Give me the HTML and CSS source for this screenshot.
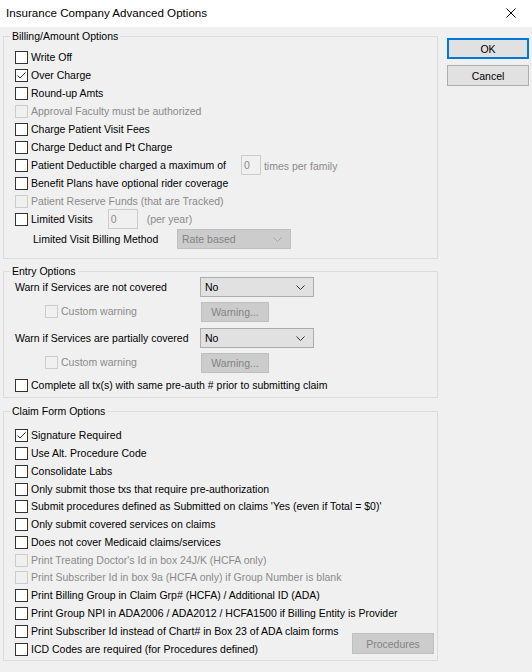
FILE: index.html
```html
<!DOCTYPE html>
<html>
<head>
<meta charset="utf-8">
<link rel="stylesheet" href="styles.css">
</head>
<body>
<div class="titlebar">
  <span class="title">Insurance Company Advanced Options</span>
  <svg class="close" width="10" height="10" viewBox="0 0 10 10"><path d="M0.5 0.5 L9.5 9.5 M9.5 0.5 L0.5 9.5" stroke="#000" stroke-width="1" fill="none"/></svg>
</div>
<div class="main">
  <div class="groups">
    <fieldset class="group g-billing">
      <legend>Billing/Amount Options</legend>
      <div class="content">
        <div class="row"><span class="cb"></span><span class="lbl">Write Off</span></div>
        <div class="row"><span class="cb"><svg width="11" height="11" viewBox="0 0 11 11"><path d="M1.5 5.5 L4 8 L9.5 2.5" stroke="#333" stroke-width="1" fill="none"/></svg></span><span class="lbl">Over Charge</span></div>
        <div class="row"><span class="cb"></span><span class="lbl">Round-up Amts</span></div>
        <div class="row disabled"><span class="cb"></span><span class="lbl">Approval Faculty must be authorized</span></div>
        <div class="row"><span class="cb"></span><span class="lbl">Charge Patient Visit Fees</span></div>
        <div class="row"><span class="cb"></span><span class="lbl">Charge Deduct and Pt Charge</span></div>
        <div class="row"><span class="cb"></span><span class="lbl">Patient Deductible charged a maximum of</span><span class="num num-deduct">0</span><span class="muted muted-times">times per family</span></div>
        <div class="row"><span class="cb"></span><span class="lbl">Benefit Plans have optional rider coverage</span></div>
        <div class="row disabled"><span class="cb"></span><span class="lbl">Patient Reserve Funds (that are Tracked)</span></div>
        <div class="row"><span class="cb"></span><span class="lbl">Limited Visits</span><span class="num num-visits">0</span><span class="muted muted-year">(per year)</span></div>
        <div class="method-row"><span class="method-label">Limited Visit Billing Method</span><div class="select select-disabled select-method"><span>Rate based</span><svg width="9" height="5" viewBox="0 0 9 5"><path d="M0.5 0.5 L4.5 4.5 L8.5 0.5" stroke="#a8a8a8" stroke-width="1" fill="none"/></svg></div></div>
      </div>
    </fieldset>

    <fieldset class="group g-entry">
      <legend>Entry Options</legend>
      <div class="content">
        <div class="erow erow-first"><span class="elabel">Warn if Services are not covered</span><div class="select"><span>No</span><svg width="9" height="5" viewBox="0 0 9 5"><path d="M0.5 0.5 L4.5 4.5 L8.5 0.5" stroke="#333" stroke-width="1" fill="none"/></svg></div></div>
        <div class="erow erow-sub"><span class="custom disabled"><span class="cb"></span><span class="lbl">Custom warning</span></span><span class="btn btn-disabled btn-warn">Warning...</span></div>
        <div class="erow erow-second"><span class="elabel">Warn if Services are partially covered</span><div class="select"><span>No</span><svg width="9" height="5" viewBox="0 0 9 5"><path d="M0.5 0.5 L4.5 4.5 L8.5 0.5" stroke="#333" stroke-width="1" fill="none"/></svg></div></div>
        <div class="erow erow-sub"><span class="custom disabled"><span class="cb"></span><span class="lbl">Custom warning</span></span><span class="btn btn-disabled btn-warn">Warning...</span></div>
        <div class="row row-complete"><span class="cb"></span><span class="lbl">Complete all tx(s) with same pre-auth # prior to submitting claim</span></div>
      </div>
    </fieldset>

    <fieldset class="group g-claim">
      <legend>Claim Form Options</legend>
      <div class="content">
        <div class="row crow"><span class="cb"><svg width="11" height="11" viewBox="0 0 11 11"><path d="M1.5 5.5 L4 8 L9.5 2.5" stroke="#333" stroke-width="1" fill="none"/></svg></span><span class="lbl">Signature Required</span></div>
        <div class="row crow"><span class="cb"></span><span class="lbl">Use Alt. Procedure Code</span></div>
        <div class="row crow"><span class="cb"></span><span class="lbl">Consolidate Labs</span></div>
        <div class="row crow"><span class="cb"></span><span class="lbl">Only submit those txs that require pre-authorization</span></div>
        <div class="row crow"><span class="cb"></span><span class="lbl">Submit procedures defined as Submitted on claims 'Yes (even if Total = $0)'</span></div>
        <div class="row crow"><span class="cb"></span><span class="lbl">Only submit covered services on claims</span></div>
        <div class="row crow"><span class="cb"></span><span class="lbl">Does not cover Medicaid claims/services</span></div>
        <div class="row crow disabled"><span class="cb"></span><span class="lbl">Print Treating Doctor's Id in box 24J/K (HCFA only)</span></div>
        <div class="row crow disabled"><span class="cb"></span><span class="lbl">Print Subscriber Id in box 9a (HCFA only) if Group Number is blank</span></div>
        <div class="row crow"><span class="cb"></span><span class="lbl">Print Billing Group in Claim Grp# (HCFA) / Additional ID (ADA)</span></div>
        <div class="row crow"><span class="cb"></span><span class="lbl">Print Group NPI in ADA2006 / ADA2012 / HCFA1500 if Billing Entity is Provider</span></div>
        <div class="row crow"><span class="cb"></span><span class="lbl">Print Subscriber Id instead of Chart# in Box 23 of ADA claim forms</span></div>
        <div class="row crow row-icd"><span class="cb"></span><span class="lbl">ICD Codes are required (for Procedures defined)</span><span class="btn btn-disabled btn-proc">Procedures</span></div>
      </div>
    </fieldset>
  </div>
  <div class="actions">
    <span class="btn btn-ok">OK</span>
    <span class="btn btn-cancel">Cancel</span>
  </div>
</div>
</body>
</html>
```

FILE: styles.css
```css
html, body {
  margin: 0;
  padding: 0;
}
body {
  width: 532px;
  height: 672px;
  overflow: hidden;
  background: #f0f0f0;
  font-family: "Liberation Sans", Arial, sans-serif;
  font-size: 10.5px;
  color: #000;
}
.titlebar {
  height: 27px;
  background: #fff;
  display: flex;
  align-items: center;
  justify-content: space-between;
  padding: 0 16px 0 6px;
  box-sizing: border-box;
}
.title {
  font-size: 11.6px;
  line-height: 16px;
  margin-top: -1px;
}
.close {
  display: block;
  margin-top: -1px;
}
.main {
  display: flex;
  align-items: flex-start;
  padding: 3px 0 0 3px;
  gap: 9px;
}
.groups {
  width: 435px;
  display: flex;
  flex-direction: column;
}
.group {
  margin: 0;
  padding: 0;
  border: 1px solid #dcdcdc;
  min-width: 0;
}
.group legend {
  margin-left: 6px;
  padding: 0 2px;
  line-height: 13px;
  font-size: 10.5px;
}
.g-entry { margin-top: 6px; }
.g-claim { margin-top: 7px; }
.content {
  padding-left: 11px;
}
.g-billing .content { padding-top: 5px; padding-bottom: 9px; }
.g-entry .content { padding-top: 0; padding-bottom: 3px; }
.g-claim .content { padding-top: 9px; padding-bottom: 2px; }

.row {
  height: 18px;
  display: flex;
  align-items: center;
  white-space: nowrap;
}
.crow { height: 17.75px; }
.cb {
  width: 13px;
  height: 13px;
  box-sizing: border-box;
  border: 1px solid #333;
  background: #fff;
  flex: none;
  display: flex;
  align-items: center;
  justify-content: center;
}
.cb svg { display: block; }
.lbl {
  margin-left: 3px;
  line-height: 13px;
}
.disabled .cb {
  border-color: #cccccc;
  background: #f0f0f0;
}
.disabled .lbl {
  color: #8a8a8a;
}
.num {
  height: 20px;
  box-sizing: border-box;
  border: 1px solid #cccccc;
  background: #f0f0f0;
  color: #8a8a8a;
  line-height: 18px;
  padding-left: 2px;
  flex: none;
}
.num-deduct { width: 20px; margin-left: 15px; }
.num-visits { width: 30px; margin-left: 15px; margin-top: -1px; }
.muted { color: #8a8a8a; }
.muted-times { margin-left: 3px; margin-top: 2px; }
.muted-year { margin-left: 9px; }

.method-row {
  display: flex;
  align-items: center;
  margin-top: 1px;
  height: 20px;
}
.method-label {
  width: 144px;
  padding-left: 18px;
  flex: none;
}
.select {
  width: 114px;
  height: 20px;
  box-sizing: border-box;
  border: 1px solid #adadad;
  background: #e1e1e1;
  display: flex;
  align-items: center;
  justify-content: space-between;
  padding: 0 8px 0 4px;
  flex: none;
}
.select svg { display: block; }
.select-disabled {
  background: #cccccc;
  border-color: #bfbfbf;
  color: #838383;
}

.erow {
  display: flex;
  align-items: center;
  height: 20px;
  white-space: nowrap;
}
.erow-first { margin-top: -1px; }
.erow-sub { margin-top: 5px; }
.erow-second { margin-top: 6px; }
.elabel {
  width: 185px;
  flex: none;
}
.custom {
  display: flex;
  align-items: center;
  width: 186px;
  padding-left: 30px;
  box-sizing: border-box;
  flex: none;
  margin-top: -1px;
}
.row-complete { margin-top: 3px; }

.btn {
  display: flex;
  align-items: center;
  justify-content: center;
  box-sizing: border-box;
  border: 1px solid #adadad;
  background: #e1e1e1;
  font-size: 10.5px;
  flex: none;
}
.btn-disabled {
  background: #cccccc;
  border-color: #bfbfbf;
  color: #838383;
}
.btn-warn {
  width: 68px;
  height: 20px;
}
.row-icd {
  align-items: flex-start;
}
.row-icd .cb { margin-top: 3px; }
.row-icd .lbl { margin-top: 3px; }
.btn-proc {
  width: 82px;
  height: 21px;
  margin-left: auto;
  margin-right: 3px;
  margin-top: -7px;
}

.actions {
  padding-top: 8px;
  display: flex;
  flex-direction: column;
  gap: 6px;
}
.btn-ok, .btn-cancel {
  width: 82px;
  height: 21px;
}
.btn-ok {
  border: 2px solid #0078d7;
}
```
